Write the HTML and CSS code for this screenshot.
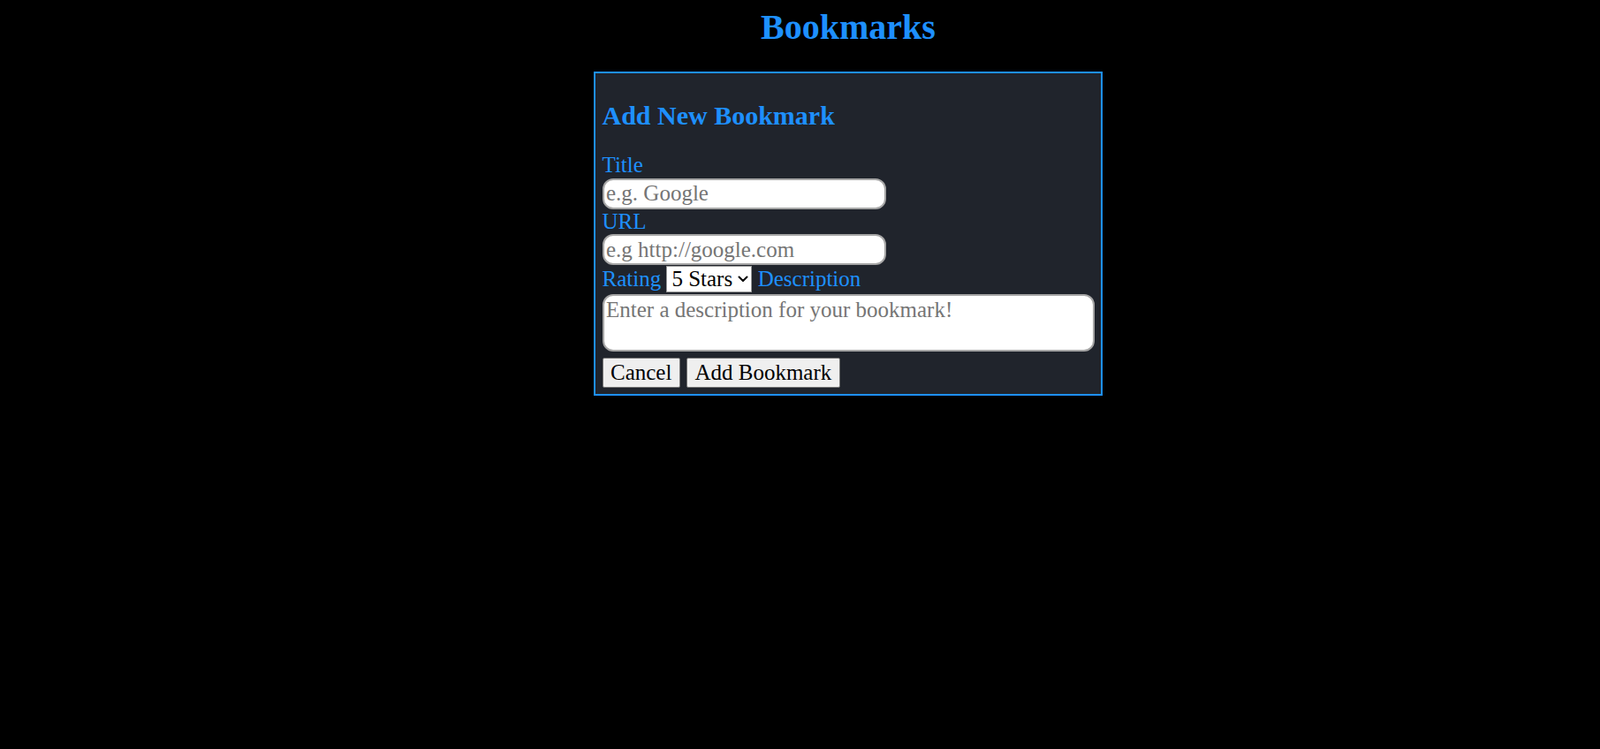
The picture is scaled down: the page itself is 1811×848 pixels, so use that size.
FILE: index.html
```html
<!DOCTYPE html>
<html lang="en">
<head>
<meta charset="utf-8">
<title>Bookmarks</title>
<link rel="stylesheet" href="styles.css">
</head>
<body>
<div class="page">
  <h1 class="page-title">Bookmarks</h1>
  <form class="form-card">
    <h2 class="form-title">Add New Bookmark</h2>
    <label class="field-label" for="title">Title</label>
    <input class="text-input" id="title" type="text" placeholder="e.g. Google">
    <label class="field-label" for="url">URL</label>
    <input class="text-input" id="url" type="text" placeholder="e.g http://google.com">
    <div class="rating-row"><label class="inline-label" for="rating">Rating</label> <span class="select-wrap"><select class="rating-select" id="rating"><option>5 Stars</option><option>4 Stars</option><option>3 Stars</option><option>2 Stars</option><option>1 Star</option></select><svg class="select-arrow" width="12" height="8" viewBox="0 0 12 8" aria-hidden="true"><path d="M1.5 1.5 L6 6 L10.5 1.5" fill="none" stroke="#000" stroke-width="2" stroke-linecap="round" stroke-linejoin="round"/></svg></span> <label class="inline-label" for="desc">Description</label></div>
    <textarea class="desc-input" id="desc" placeholder="Enter a description for your bookmark!"></textarea>
    <div class="actions"><button class="btn" type="button">Cancel</button> <button class="btn" type="submit">Add Bookmark</button></div>
  </form>
</div>
</body>
</html>
```
FILE: styles.css
```css
html, body {
  margin: 0;
  padding: 0;
  background: #000;
}

body {
  font-family: "Liberation Serif", "Times New Roman", serif;
  color: #1e90ff;
}

.page {
  padding-left: 109px;
  display: flex;
  flex-direction: column;
  align-items: center;
}

.page-title {
  font-size: 40px;
  font-weight: bold;
  line-height: 46px;
  margin: 7.5px 0 27.5px;
  color: #1e90ff;
}

.form-card {
  box-sizing: border-box;
  width: 576px;
  background: #20242c;
  border: 2px solid #1e90ff;
  padding: 7.5px;
}

.form-title {
  font-size: 30px;
  font-weight: bold;
  line-height: 34.5px;
  margin: 23px 0 25px;
}

.field-label {
  display: block;
  font-size: 25px;
  line-height: 28.7px;
}

.text-input {
  display: block;
  box-sizing: border-box;
  width: 321px;
  height: 35px;
  margin: 0;
  padding: 1px 2.5px;
  border: 2px solid #a6a6a6;
  border-radius: 12px;
  background: #fff;
  font-family: "Liberation Serif", "Times New Roman", serif;
  font-size: 25px;
  color: #000;
  outline: none;
}

.text-input::placeholder,
.desc-input::placeholder {
  color: #757575;
}

.rating-row {
  height: 33px;
  padding-top: 1px;
  box-sizing: border-box;
  font-size: 25px;
  line-height: 28.7px;
}

.inline-label {
  font-size: 25px;
}

.select-wrap {
  position: relative;
  display: inline-block;
}

.rating-select {
  -webkit-appearance: none;
  appearance: none;
  box-sizing: border-box;
  width: 97px;
  height: 30px;
  margin: 0;
  padding: 0 18px 0 5px;
  border: 1px solid #9a9a9a;
  border-radius: 0;
  background: #fff;
  color: #000;
  font-family: "Liberation Serif", "Times New Roman", serif;
  font-size: 25px;
  line-height: 28px;
  vertical-align: baseline;
}

.select-arrow {
  position: absolute;
  right: 4px;
  top: 11px;
  pointer-events: none;
}

.desc-input {
  display: block;
  box-sizing: border-box;
  width: 100%;
  height: 64.5px;
  margin: 0;
  padding: 2px 2.5px;
  border: 2px solid #a6a6a6;
  border-radius: 12px;
  background: #fff;
  font-family: "Liberation Serif", "Times New Roman", serif;
  font-size: 25px;
  line-height: 28.7px;
  resize: none;
  outline: none;
}

.actions {
  margin-top: 7px;
  display: flex;
  gap: 7px;
}

.btn {
  box-sizing: border-box;
  height: 34px;
  margin: 0;
  padding: 0 8.5px;
  border: 1px solid #767676;
  border-radius: 2px;
  background: #efefef;
  color: #000;
  font-family: "Liberation Serif", "Times New Roman", serif;
  font-size: 25px;
  line-height: 28.7px;
}
```
